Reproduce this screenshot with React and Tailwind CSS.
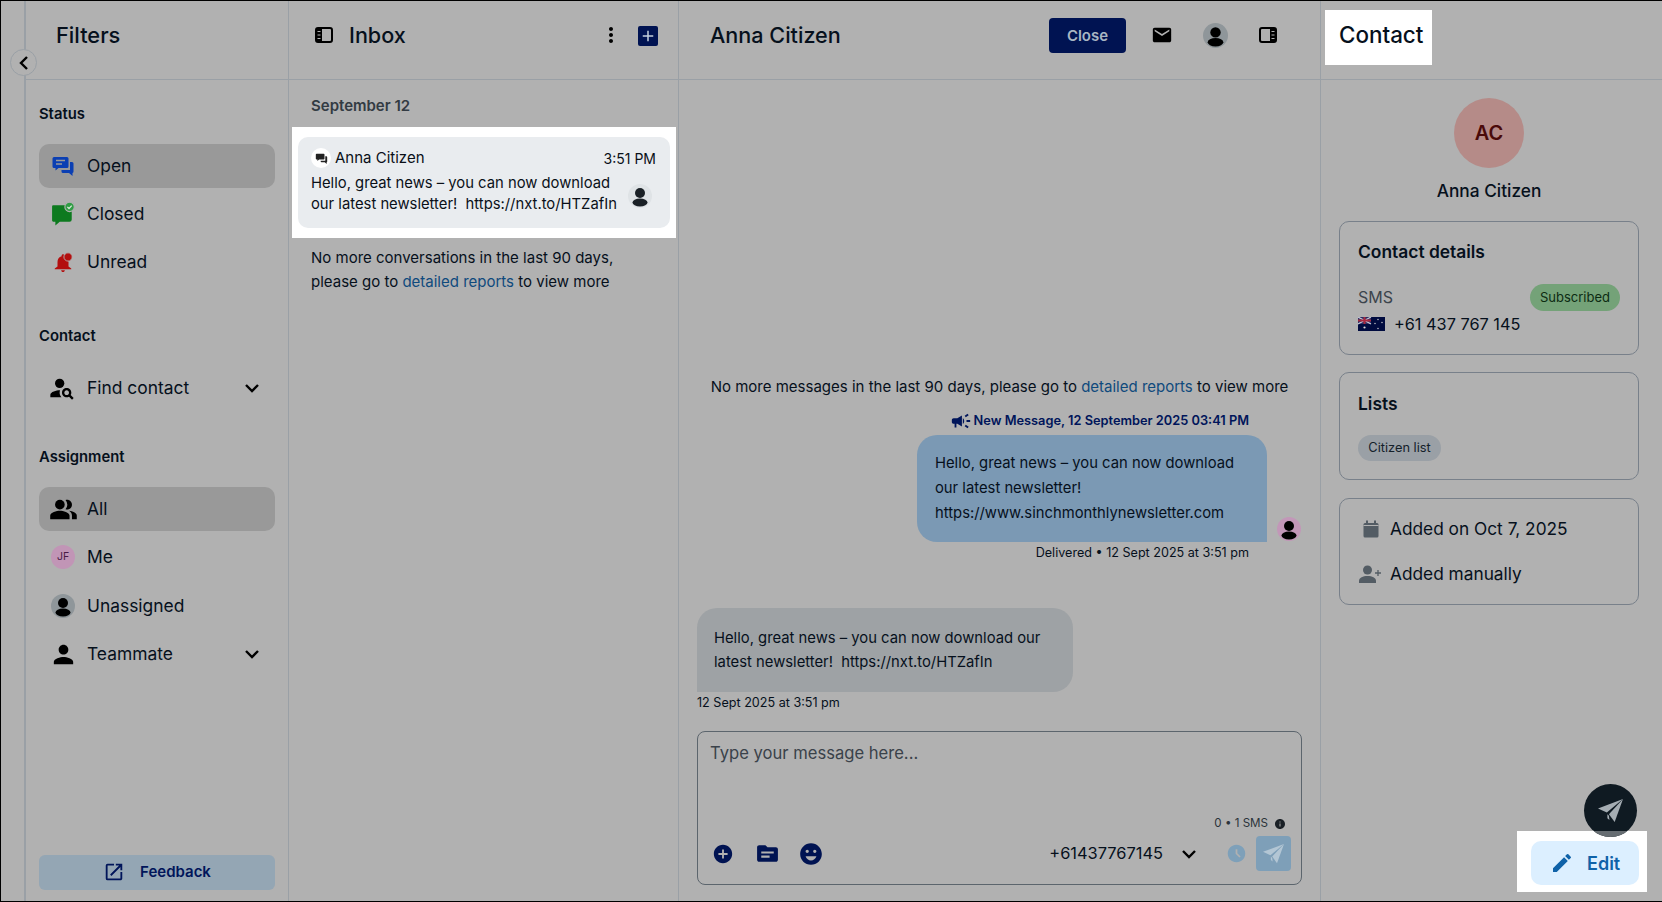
// App.jsx
import React from "react";
import {
  MdPersonSearch,
  MdPeopleAlt,
  MdPerson,
  MdOpenInNew,
  MdMoreVert,
  MdMail,
  MdCampaign,
  MdAddCircle,
  MdTopic,
  MdEmojiEmotions,
  MdAccessTimeFilled,
  MdInfo,
  MdEdit,
  MdAdd,
} from "react-icons/md";

const font = { fontFamily: "Inter, 'Noto Sans', sans-serif" };

function Persona({ size = 24, bg = "#8f969a", fg = "#000" }) {
  return (
    <svg width={size} height={size} viewBox="0 0 24 24" className="shrink-0">
      <circle cx="12" cy="12" r="12" fill={bg} />
      <circle cx="12" cy="9" r="5" fill={fg} />
      <ellipse cx="12" cy="18.5" rx="7.5" ry="4" fill={fg} />
    </svg>
  );
}

function BubblesIcon({ size = 24, color = "#0b3fb3", line = "#999999" }) {
  return (
    <svg width={size} height={size} viewBox="0 0 24 24" className="shrink-0">
      <path d="M3 3h13a1.500 1.500 0 0 1 1.500 1.500v8A1.500 1.500 0 0 1 16 14H7.500l-3 2.500V14H3a1.500 1.500 0 0 1-1.500-1.500v-8A1.500 1.500 0 0 1 3 3z" fill={color} />
      <path d="M5 6.500h9M5 10h6" stroke={line} strokeWidth="1.300" />
      <path d="M19 8h2a1.500 1.500 0 0 1 1.500 1.500v8A1.500 1.500 0 0 1 21.500 19v3L18 19h-6a1.500 1.500 0 0 1-1.500-1.500V16H19V8z" fill={color} />
    </svg>
  );
}

function ClosedIcon() {
  return (
    <svg width="24" height="24" viewBox="0 0 22 22">
      <path d="M2 3h15a2 2 0 0 1 2 2v11a2 2 0 0 1-2 2H8l-4 3.500V18H2a1 1 0 0 1-1-1V4a1 1 0 0 1 1-1z" fill="#0d7a1f" />
      <circle cx="17" cy="4.500" r="4.300" fill="#2f9d44" stroke="#b1b1b1" strokeWidth="1" />
      <path d="M15 4.500l1.500 1.500L19 3.300" fill="none" stroke="#d8e8d8" strokeWidth="1.200" />
    </svg>
  );
}

function UnreadIcon() {
  return (
    <svg width="22" height="22" viewBox="0 0 24 24">
      <path
        d="M12 23c1.100 0 2-.9 2-2h-4c0 1.100.9 2 2 2zm6-6v-5c0-3.070-1.630-5.640-4.500-6.320V5c0-.83-.67-1.500-1.500-1.500s-1.500.67-1.500 1.500v.68C7.640 6.360 6 8.920 6 12v5l-3 2v1h18v-1l-3-2z"
        fill="#b30f0f"
      />
      <circle cx="17.500" cy="6.500" r="4.500" fill="#b30f0f" stroke="#b1b1b1" strokeWidth="1" />
    </svg>
  );
}

function PanelIcon({ flip = false }) {
  return (
    <svg width="18" height="16" viewBox="0 0 18 16" className={flip ? "-scale-x-100" : ""}>
      <rect x="1" y="1" width="16" height="14" rx="2" fill="none" stroke="#000" strokeWidth="2" />
      <rect x="1" y="1" width="6" height="14" fill="#000" />
      <path d="M2.500 4.500h3M2.500 8h3M2.500 11.500h3" stroke="#b1b1b1" strokeWidth="1.200" />
    </svg>
  );
}

function PlaneIcon({ size = 24, color = "#b3c6d4" }) {
  return (
    <svg width={size} height={size} viewBox="0 0 24 24" className="shrink-0">
      <path d="M0 10L24 1 8.500 14z" fill={color} />
      <path d="M24 1L16 23l-5.500-7.500z" fill={color} />
      <path d="M9 15.500l1.500 1.500 .5 4-2-1.500z" fill={color} />
    </svg>
  );
}

function CalendarIcon() {
  return (
    <svg width="18" height="18" viewBox="0 0 18 18" className="shrink-0">
      <rect x="1.500" y="3" width="15" height="14.500" rx="1.500" fill="#535c64" />
      <path d="M5 .5v4M13 .5v4" stroke="#535c64" strokeWidth="2" />
      <path d="M1.500 5.500h15" stroke="#b1b1b1" strokeWidth="1" />
    </svg>
  );
}

function PersonAddIcon() {
  return (
    <svg width="23" height="18" viewBox="0 0 23 18" className="shrink-0">
      <circle cx="8.500" cy="5" r="4.500" fill="#535c64" />
      <path d="M0 18v-2c0-3.300 4-5 8.500-5s8.500 1.700 8.500 5v2z" fill="#535c64" />
      <path d="M19 5v6M16 8h6" stroke="#535c64" strokeWidth="1.300" />
    </svg>
  );
}

function Flag() {
  return (
    <svg width="27" height="14" viewBox="0 0 27 14" className="shrink-0">
      <rect width="27" height="14" fill="#000b3f" />
      <rect width="13" height="7" fill="#2a2f63" />
      <path d="M0 0l13 7M13 0L0 7" stroke="#c9c9d8" strokeWidth="1.200" />
      <path d="M6.500 0v7M0 3.500h13" stroke="#a8283f" strokeWidth="2" />
      <circle cx="6.500" cy="10.500" r="1.100" fill="#d8d8d8" />
      <circle cx="20" cy="2.500" r=".7" fill="#d8d8d8" />
      <circle cx="24" cy="5.500" r=".7" fill="#d8d8d8" />
      <circle cx="20" cy="11.500" r=".7" fill="#d8d8d8" />
      <circle cx="17" cy="6.500" r=".7" fill="#d8d8d8" />
    </svg>
  );
}

function Chevron({ className = "" }) {
  return (
    <svg width="24" height="24" viewBox="0 0 24 24" className={`shrink-0 ${className}`}>
      <path d="M6 9l6 6 6-6" fill="none" stroke="#000" strokeWidth="2.400" />
    </svg>
  );
}

function NavRow({ icon, label, active, chevron, className = "" }) {
  return (
    <div
      className={`flex items-center h-[44px] pl-3 pr-[11px] rounded-[10px] ${active ? "bg-[#999999]" : ""} ${className}`}
    >
      <span className="w-6 h-6 flex items-center justify-center shrink-0">{icon}</span>
      <span className="ml-[12px] pt-[1px] flex-1 text-[17.400px] text-[#06101c]">{label}</span>
      {chevron && <Chevron />}
    </div>
  );
}

function SectionLabel({ children, className = "" }) {
  return <div className={`h-5 leading-5 text-[14.800px] font-semibold text-[#06101c] ${className}`}>{children}</div>;
}

function FiltersPanel() {
  return (
    <aside className="w-[263px] shrink-0 border-r border-[#9aa0a6] flex flex-col">
      <header className="h-[79px] shrink-0 border-b border-[#9aa0a6] pl-[30px] pt-[20px]">
        <h2 className="text-[21.800px] leading-7 font-medium text-[#06101c]">Filters</h2>
      </header>
      <div className="flex-1 flex flex-col px-[13px] pt-[24px] pb-[11px]">
        <SectionLabel>Status</SectionLabel>
        <div className="mt-5 flex flex-col gap-1">
          <NavRow active icon={<BubblesIcon />} label="Open" />
          <NavRow icon={<ClosedIcon />} label="Closed" />
          <NavRow icon={<UnreadIcon />} label="Unread" />
        </div>
        <SectionLabel className="mt-[42px]">Contact</SectionLabel>
        <NavRow className="mt-5" icon={<MdPersonSearch size={28} className="shrink-0 -ml-[2px]" />} label="Find contact" chevron />
        <SectionLabel className="mt-[37px]">Assignment</SectionLabel>
        <div className="mt-5 flex flex-col">
          <NavRow active icon={<MdPeopleAlt size={29} className="shrink-0" />} label="All" />
          <NavRow
            className="mt-1"
            icon={
              <span className="w-6 h-6 rounded-full bg-[#c195b6] text-[#4a1a45] text-[10.500px] flex items-center justify-center">
                JF
              </span>
            }
            label="Me"
          />
          <NavRow className="mt-[5px]" icon={<Persona />} label="Unassigned" />
          <NavRow className="mt-1" icon={<MdPerson size={29} className="shrink-0" />} label="Teammate" chevron />
        </div>
        <button
          type="button"
          className="mt-auto h-[35px] rounded-md bg-[#94a6b4] flex items-center justify-center gap-[15px] pb-[1px] text-[15px] font-semibold text-[#00155a]"
        >
          <MdOpenInNew size={22} />
          Feedback
        </button>
      </div>
    </aside>
  );
}

function InboxPanel() {
  return (
    <section className="w-[390px] shrink-0 border-r border-[#9aa0a6] flex flex-col">
      <header className="h-[79px] shrink-0 border-b border-[#9aa0a6] flex items-start pt-[20px] pl-[26px] pr-[20px]">
        <span className="h-7 flex items-center">
          <PanelIcon />
        </span>
        <h2 className="ml-4 text-[21.600px] leading-7 font-medium text-[#06101c]">Inbox</h2>
        <span className="ml-auto h-7 flex items-center">
          <MdMoreVert size={24} className="text-black" />
        </span>
        <span className="ml-[15px] mt-[5px] w-5 h-5 rounded-[2px] bg-[#001352] flex items-center justify-center">
          <MdAdd size={18} className="text-[#c3d0dc]" />
        </span>
      </header>
      <div className="pt-4">
        <div className="pl-[22px] h-5 leading-5 text-[15px] font-semibold text-[#333b43]">September 12</div>
        <div className="mt-[11px] ml-[3px] w-[384px] h-[111px] bg-white px-[6px] py-[10px]">
          <div className="h-full rounded-[10px] bg-[#e9ecef] pl-[13px] pr-[14px] pt-[11px]">
            <div className="flex items-center h-5">
              <span className="w-5 h-5 rounded-full bg-white flex items-center justify-center">
                <BubblesIcon size={13} color="#222222" line="#222222" />
              </span>
              <span className="ml-1 text-[15px] text-[#0a1018]">Anna Citizen</span>
              <span className="ml-auto text-[14px] text-[#0a1018]">3:51 PM</span>
            </div>
            <div className="flex items-center mt-[5px]">
              <p className="text-[14.800px] leading-[21px] text-[#0a1018] whitespace-nowrap">
                Hello, great news – you can now download
                <br />
                our latest newsletter!&nbsp; https://nxt.to/HTZafIn
              </p>
              <span className="ml-auto mr-[4px] mt-[3px]">
                <Persona bg="#dfe3e6" fg="#1a2026" />
              </span>
            </div>
          </div>
        </div>
        <p className="mt-2 pl-[22px] text-[15px] leading-6 text-[#06101c]">
          No more conversations in the last 90 days,
          <br />
          please go to <span className="text-[#0f4a7d]">detailed reports</span> to view more
        </p>
      </div>
    </section>
  );
}

function ChatPanel() {
  return (
    <section className="w-[642px] shrink-0 border-r border-[#9aa0a6] flex flex-col">
      <header className="h-[79px] shrink-0 border-b border-[#9aa0a6] flex items-start pl-[31px] pt-[20px]">
        <h2 className="text-[21.600px] leading-7 font-medium text-[#06101c]">Anna Citizen</h2>
        <button
          type="button"
          className="ml-auto -mt-[3px] h-[35px] w-[77px] pt-[2px] rounded-[4px] bg-[#001352] text-[15px] font-semibold text-[#a9b6c3]"
        >
          Close
        </button>
        <span className="ml-[25px] h-7 flex items-center">
          <MdMail size={22} className="text-black" />
        </span>
        <span className="ml-[30px] h-7 flex items-center">
          <Persona size={25} />
        </span>
        <span className="ml-[31px] mr-[43px] h-7 flex items-center">
          <PanelIcon flip />
        </span>
      </header>
      <div className="flex-1 flex flex-col pt-[295px] pb-[16px]">
        <p className="text-center h-6 leading-6 text-[15px] text-[#06101c]">
          No more messages in the last 90 days, please go to <span className="text-[#0f4a7d]">detailed reports</span> to
          view more
        </p>
        <div className="mt-[11px] h-5 pt-[1px] pr-[71px] flex items-center justify-end gap-[2px] text-[12.800px] font-semibold text-[#00155a]">
          <MdCampaign size={22} />
          New Message, 12 September 2025 03:41 PM
        </div>
        <div className="mt-[5px] flex items-end justify-end gap-[10px] pr-[19px]">
          <div className="w-[350px] h-[107px] rounded-[20px] rounded-br-none bg-[#7b99b4] pl-[18px] pt-[16px] text-[14.800px] leading-[25px] text-[#06101c]">
            Hello, great news – you can now download
            <br />
            our latest newsletter!
            <br />
            https://www.sinchmonthlynewsletter.com
          </div>
          <span className="mb-[1px]">
            <Persona bg="#c297b8" />
          </span>
        </div>
        <div className="h-5 leading-5 pt-[1px] pr-[71px] text-right text-[12.600px] text-[#06101c]">
          Delivered • 12 Sept 2025 at 3:51 pm
        </div>
        <div className="mt-[46px] ml-[18px] w-[376px] h-[84px] rounded-[20px] rounded-bl-none bg-[#9ea2a5] pl-[17px] pt-[18px] text-[14.800px] leading-6 text-[#06101c]">
          Hello, great news – you can now download our
          <br />
          latest newsletter!&nbsp; https://nxt.to/HTZafIn
        </div>
        <div className="ml-[18px] h-5 leading-5 pt-[1px] text-[12.600px] text-[#06101c]">12 Sept 2025 at 3:51 pm</div>
        <div className="mt-auto ml-[18px] w-[605px] h-[154px] rounded-[8px] border border-[#5c656d] flex flex-col pl-[12px] pr-[10px] pt-[9px] pb-[13px]">
          <div className="h-6 leading-6 text-[16.600px] text-[#3a424a]">Type your message here...</div>
          <div className="mt-auto flex items-center justify-end gap-1 pr-[5px] text-[11.600px] text-[#2b333a] h-4">
            0 • 1 SMS
            <MdInfo size={12} className="ml-[2px] text-[#1a2026]" />
          </div>
          <div className="mt-[4px] flex items-center">
            <MdAddCircle size={22} className="ml-[2px] text-[#001352]" />
            <MdTopic size={25} className="ml-[21px] text-[#001352]" />
            <MdEmojiEmotions size={26} className="ml-[18px] text-[#001352]" />
            <span className="ml-auto text-[16.400px] text-[#06101c]">+61437767145</span>
            <Chevron className="ml-[14px]" />
            <MdAccessTimeFilled size={21} className="ml-[25px] text-[#7ea0b9]" />
            <span className="ml-[9px] w-[35px] h-[35px] rounded-[4px] bg-[#7e9fb8] flex items-center justify-center">
              <PlaneIcon size={21} />
            </span>
          </div>
        </div>
      </div>
    </section>
  );
}

function Card({ children, className = "" }) {
  return (
    <div className={`ml-[18px] w-[300px] rounded-[10px] border border-[#78808a] ${className}`}>{children}</div>
  );
}

function ContactPanel() {
  return (
    <section className="flex-1 relative flex flex-col">
      <header className="h-[79px] shrink-0 border-b border-[#9aa0a6] pl-[4px] pt-[9px]">
        <div className="w-[107px] h-[55px] bg-white pl-[14px] pb-[6px] flex items-center text-[22.400px] font-medium text-[#06101c]">
          Contact
        </div>
      </header>
      <div className="flex flex-col">
        <div className="w-[336px] flex flex-col items-center">
          <div className="mt-[18px] w-[70px] h-[70px] rounded-full bg-[#b58b88] flex items-center justify-center text-[20px] font-semibold text-[#4a0a0a]">
            AC
          </div>
          <div className="mt-[11px] h-6 leading-6 text-[17.300px] font-medium text-[#06101c]">Anna Citizen</div>
        </div>
        <Card className="mt-[18px] h-[134px] px-[18px] pt-[19px]">
          <h3 className="h-[22px] leading-[22px] text-[17.400px] font-semibold text-[#06101c]">Contact details</h3>
          <div className="mt-[19px] flex items-center justify-between">
            <span className="text-[16px] text-[#3c444c]">SMS</span>
            <span className="mt-[2px] h-[27px] w-[90px] rounded-full bg-[#74a278] flex items-center justify-center text-[13px] text-[#0c2b12]">
              Subscribed
            </span>
          </div>
          <div className="mt-[1px] flex items-center gap-[9px]">
            <Flag />
            <span className="text-[16.300px] text-[#06101c]">+61 437 767 145</span>
          </div>
        </Card>
        <Card className="mt-[17px] h-[108px] px-[18px] pt-[20px]">
          <h3 className="h-[22px] leading-[22px] text-[17.400px] font-semibold text-[#06101c]">Lists</h3>
          <span className="mt-[20px] inline-flex h-[26px] w-[83px] rounded-full bg-[#9aa0a6] items-center justify-center text-[12.800px] text-[#14202a]">
            Citizen list
          </span>
        </Card>
        <Card className="mt-[18px] h-[107px] pl-[19px] pt-[18px] flex flex-col gap-[21px] text-[17.300px] text-[#06101c]">
          <div className="flex items-center h-6">
            <span className="w-[23px] flex justify-center">
              <CalendarIcon />
            </span>
            <span className="ml-[8px]">Added on Oct 7, 2025</span>
          </div>
          <div className="flex items-center h-6">
            <PersonAddIcon />
            <span className="ml-[8px]">Added manually</span>
          </div>
        </Card>
      </div>
      <div className="absolute right-[15px] bottom-[9px] w-[130px] h-[61px] bg-white pl-[14px] pt-[10px]">
        <button
          type="button"
          className="w-[108px] h-[44px] rounded-[10px] bg-[#dcefff] text-[#0f62a8] text-[18px] font-semibold flex items-center pl-[19px] gap-[13px]"
        >
          <MdEdit size={24} />
          Edit
        </button>
      </div>
      <div className="absolute right-[25px] bottom-[64px] w-[53px] h-[53px] rounded-full overflow-hidden bg-[#0f1a22] flex items-center justify-center">
        <PlaneIcon size={25} color="#a5adb3" />
        <span className="absolute left-0 right-0 bottom-0 h-[6px] bg-[#666d72]" />
      </div>
    </section>
  );
}

export default function App() {
  return (
    <div
      style={font}
      className="relative w-[1662px] h-[902px] flex overflow-hidden bg-[#b1b1b1] border-y border-l border-black"
    >
      <div className="w-[25px] shrink-0 border-r-2 border-[#9aa0a6]" />
      <FiltersPanel />
      <InboxPanel />
      <ChatPanel />
      <ContactPanel />
      <button
        type="button"
        className="absolute left-[9px] top-[48px] w-[27px] h-[27px] rounded-full bg-[#b1b1b1] border border-[#9aa0a6] flex items-center justify-center"
      >
        <Chevron className="rotate-90" />
      </button>
    </div>
  );
}
